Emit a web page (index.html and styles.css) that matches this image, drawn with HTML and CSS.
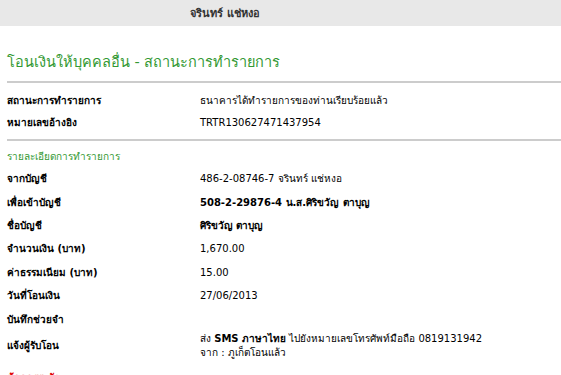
FILE: index.html
```html
<!DOCTYPE html>
<html lang="th">
<head>
  <meta charset="UTF-8" />
  <title>โอนเงินให้บุคคลอื่น - สถานะการทำรายการ</title>
  <link rel="stylesheet" href="styles.css">
</head>
<body>
  <div class="topbar">
    <span class="user">จรินทร์ แช่หงอ</span>
  </div>

  <div class="content">
    <h1 class="title">โอนเงินให้บุคคลอื่น - สถานะการทำรายการ</h1>

    <div class="info status">
      <div class="label">สถานะการทำรายการ</div>
      <div class="value">ธนาคารได้ทำรายการของท่านเรียบร้อยแล้ว</div>
      <div class="label">หมายเลขอ้างอิง</div>
      <div class="value">TRTR130627471437954</div>
    </div>

    <h2 class="section">รายละเอียดการทำรายการ</h2>

    <div class="info details">
      <div class="label">จากบัญชี</div>
      <div class="value">486-2-08746-7 จรินทร์ แช่หงอ</div>
      <div class="label">เพื่อเข้าบัญชี</div>
      <div class="value"><b>508-2-29876-4 น.ส.ศิริขวัญ ตาบุญ</b></div>
      <div class="label">ชื่อบัญชี</div>
      <div class="value"><b>ศิริขวัญ ตาบุญ</b></div>
      <div class="label">จำนวนเงิน (บาท)</div>
      <div class="value">1,670.00</div>
      <div class="label">ค่าธรรมเนียม (บาท)</div>
      <div class="value">15.00</div>
      <div class="label">วันที่โอนเงิน</div>
      <div class="value">27/06/2013</div>
      <div class="label">บันทึกช่วยจำ</div>
      <div class="value"></div>
      <div class="label">แจ้งผู้รับโอน</div>
      <div class="value multi">ส่ง <b>SMS ภาษาไทย</b> ไปยังหมายเลขโทรศัพท์มือถือ 0819131942<br>จาก : ภูเก็ตโอนแล้ว</div>
    </div>

    <div class="warning">ข้อควรระวัง</div>
  </div>
</body>
</html>
```

FILE: styles.css
```css
body {
  margin: 0;
  font-family: Tahoma, "DejaVu Sans", sans-serif;
  font-size: 10px;
  color: #000;
  background: #fff;
}
.topbar {
  height: 26px;
  background-color: #e8e8e8;
  display: flex;
  align-items: center;
  padding-left: 190px;
  font-size: 11px;
}
.user {
  font-weight: bold;
  color: #333;
}
.content {
  padding-left: 7px;
}
.title {
  margin: 26px 0 0;
  font-size: 14.5px;
  font-weight: normal;
  color: #339933;
  height: 20px;
  line-height: 20px;
  padding-bottom: 9px;
  border-bottom: 2px solid #cccccc;
}
.info {
  display: grid;
  grid-template-columns: 193px 1fr;
  align-items: center;
}
.status {
  grid-auto-rows: 22px;
  padding: 6px 0 6px;
  border-bottom: 2px solid #cccccc;
}
.label {
  font-weight: bold;
}
.section {
  margin: 0;
  padding-top: 7px;
  height: 18px;
  line-height: 18px;
  font-size: 10px;
  font-weight: normal;
  color: #339933;
}
.details {
  grid-template-rows: repeat(7, 23.4px) 30px;
  padding-top: 1px;
}
.multi {
  line-height: 14px;
}
.warning {
  color: #e00000;
  font-weight: bold;
  margin-top: 9px;
}
```
